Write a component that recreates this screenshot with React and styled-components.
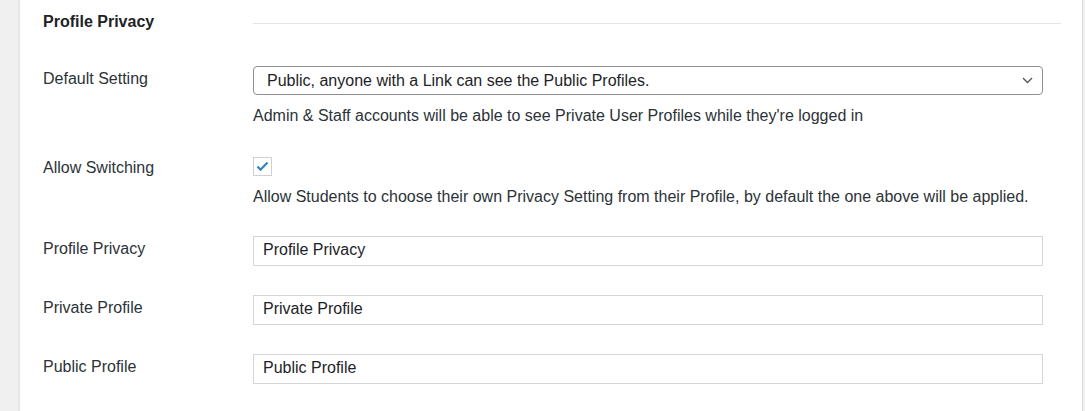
import React from 'react'
import styled, { createGlobalStyle } from 'styled-components'

const GlobalStyle = createGlobalStyle`
  html, body {
    margin: 0;
    padding: 0;
    background: #f0f0f1;
  }
  body {
    font-family: "Liberation Sans", Arial, Helvetica, sans-serif;
    font-size: 16px;
    color: #1d2327;
  }
`

const Page = styled.div`
  display: flex;
  height: 411px;
  overflow: hidden;
`

const Gutter = styled.div`
  width: 18px;
  flex: none;
  background: #f0f0f1;
  border-right: 2px solid #e6e6e6;
`

const Panel = styled.div`
  width: 1063px;
  flex: none;
  background: #fff;
  border-right: 1px solid #dcdcde;
  padding: 12px 0 0 23px;
  box-sizing: border-box;
`

const Row = styled.div`
  display: grid;
  grid-template-columns: 210px 790px;
  padding: ${p => p.$pad || '15px 0 14px'};
`

const Heading = styled.h2`
  margin: 0;
  font-size: 16px;
  font-weight: 700;
  line-height: 20px;
  color: #1d2327;
`

const Divider = styled.div`
  height: 1px;
  width: 808px;
  margin-top: 11px;
  background: #e5e5e5;
`

const Label = styled.label`
  padding-top: 3px;
  line-height: 20px;
  color: #2c3338;
`

const Field = styled.div`
  display: flex;
  flex-direction: column;
`

const SelectWrap = styled.div`
  position: relative;
  width: 790px;
  height: 29px;
`

const Select = styled.select`
  appearance: none;
  width: 100%;
  height: 29px;
  box-sizing: border-box;
  border: 1px solid #8c8f94;
  border-radius: 4px;
  background: #fff;
  padding: 0 30px 0 13px;
  font-family: inherit;
  font-size: 16px;
  color: #1d2327;
`

const Chevron = styled.svg`
  position: absolute;
  right: 10px;
  top: 11px;
  pointer-events: none;
`

const Description = styled.p`
  margin: 11px 0 0;
  line-height: 20px;
  color: #2c3338;
`

const Check = styled.span`
  display: flex;
  align-items: center;
  justify-content: center;
  width: 19px;
  height: 19px;
  margin-top: 2px;
  box-sizing: border-box;
  border: 1px solid #d0d0d2;
  background: #fff;
`

const TextInput = styled.input`
  width: 790px;
  height: 30px;
  box-sizing: border-box;
  border: 1px solid #d6d6d8;
  border-radius: 0;
  padding: 0 9px 3px;
  font-family: inherit;
  font-size: 16px;
  color: #1d2327;
  background: #fff;
  outline: none;
`

const textFields = [
  { label: 'Profile Privacy', value: 'Profile Privacy' },
  { label: 'Private Profile', value: 'Private Profile' },
  { label: 'Public Profile', value: 'Public Profile' },
]

export default function App() {
  return (
    <Page>
      <GlobalStyle />
      <Gutter />
      <Panel>
        <Row $pad="0 0 19px">
          <Heading>Profile Privacy</Heading>
          <Divider />
        </Row>

        <Row>
          <Label>Default Setting</Label>
          <Field>
            <SelectWrap>
              <Select defaultValue="public">
                <option value="public">Public, anyone with a Link can see the Public Profiles.</option>
                <option value="private">Private, only logged in users can see Profiles.</option>
              </Select>
              <Chevron width="11" height="7" viewBox="0 0 11 7">
                <path d="M1 1l4.5 4.5L10 1" fill="none" stroke="#50575e" strokeWidth="1.4" />
              </Chevron>
            </SelectWrap>
            <Description>
              Admin &amp; Staff accounts will be able to see Private User Profiles while they're logged in
            </Description>
          </Field>
        </Row>

        <Row>
          <Label>Allow Switching</Label>
          <Field>
            <Check>
              <svg width="13" height="11" viewBox="0 0 13 11">
                <path d="M1.5 5.5l3 3.2L11.5 1.5" fill="none" stroke="#2e86c1" strokeWidth="2.2" />
              </svg>
            </Check>
            <Description>
              Allow Students to choose their own Privacy Setting from their Profile, by default the one above will be applied.
            </Description>
          </Field>
        </Row>

        {textFields.map(f => (
          <Row key={f.label}>
            <Label>{f.label}</Label>
            <Field>
              <TextInput defaultValue={f.value} />
            </Field>
          </Row>
        ))}
      </Panel>
    </Page>
  )
}
